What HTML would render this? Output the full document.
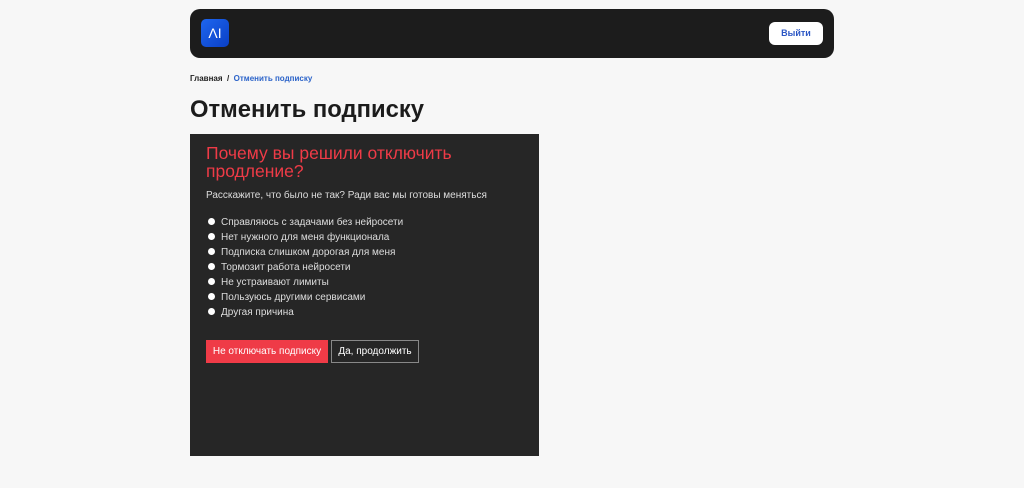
<!DOCTYPE html>
<html><head><meta charset="utf-8"><style>
*{margin:0;padding:0;box-sizing:border-box}
body{width:1024px;height:488px;background:#f7f7f7;font-family:"Liberation Sans",sans-serif;position:relative;overflow:hidden}
.hdr{position:absolute;left:190px;top:9px;width:644px;height:49px;background:#1c1c1c;border-radius:10px}
.logo{position:absolute;left:11px;top:10px;width:28px;height:28px;border-radius:5px;background:linear-gradient(135deg,#1e66f0,#0a3fc4);color:#fff;font-size:14px;text-align:center;line-height:28px}
.btn{position:absolute;left:579px;top:13px;width:54px;height:23px;background:#fff;border-radius:6px;color:#2b56c4;font-size:9px;font-weight:bold;text-align:center;line-height:23px}
.bc{position:absolute;left:190px;top:74px;font-size:8px;font-weight:bold;color:#222}
.bc span{color:#2b63c9}
h1{position:absolute;left:190px;top:96px;font-size:23.8px;font-weight:bold;color:#1c1c1c}
.card{position:absolute;left:190px;top:134px;width:349px;height:322px;background:#262626;color:#ddd}
.q{position:absolute;left:16px;top:10px;font-size:17.5px;line-height:18px;color:#ef3b47}
.sub{position:absolute;left:16px;top:56px;font-size:10px}
ul{position:absolute;left:18px;top:81px;list-style:none;font-size:10px}
li{height:15px;line-height:15px}
li:before{content:"";display:inline-block;width:7px;height:7px;border-radius:50%;background:#fff;margin-right:6px}
.b1{position:absolute;left:16px;top:206px;width:122px;height:23px;background:#ef3b47;color:#fff;font-size:10px;text-align:center;line-height:23px}
.b2{position:absolute;left:141px;top:206px;width:88px;height:23px;border:1px solid #888;color:#fff;font-size:10px;text-align:center;line-height:21px}
</style></head><body>
<div class="hdr"><div class="logo">ΛI</div><div class="btn">Выйти</div></div>
<div class="bc">Главная &nbsp;/ &nbsp;<span>Отменить подписку</span></div>
<h1>Отменить подписку</h1>
<div class="card">
<div class="q">Почему вы решили отключить<br>продление?</div>
<div class="sub">Расскажите, что было не так? Ради вас мы готовы меняться</div>
<ul><li>Справляюсь с задачами без нейросети</li><li>Нет нужного для меня функционала</li><li>Подписка слишком дорогая для меня</li><li>Тормозит работа нейросети</li><li>Не устраивают лимиты</li><li>Пользуюсь другими сервисами</li><li>Другая причина</li></ul>
<div class="b1">Не отключать подписку</div><div class="b2">Да, продолжить</div>
</div>
</body></html>
